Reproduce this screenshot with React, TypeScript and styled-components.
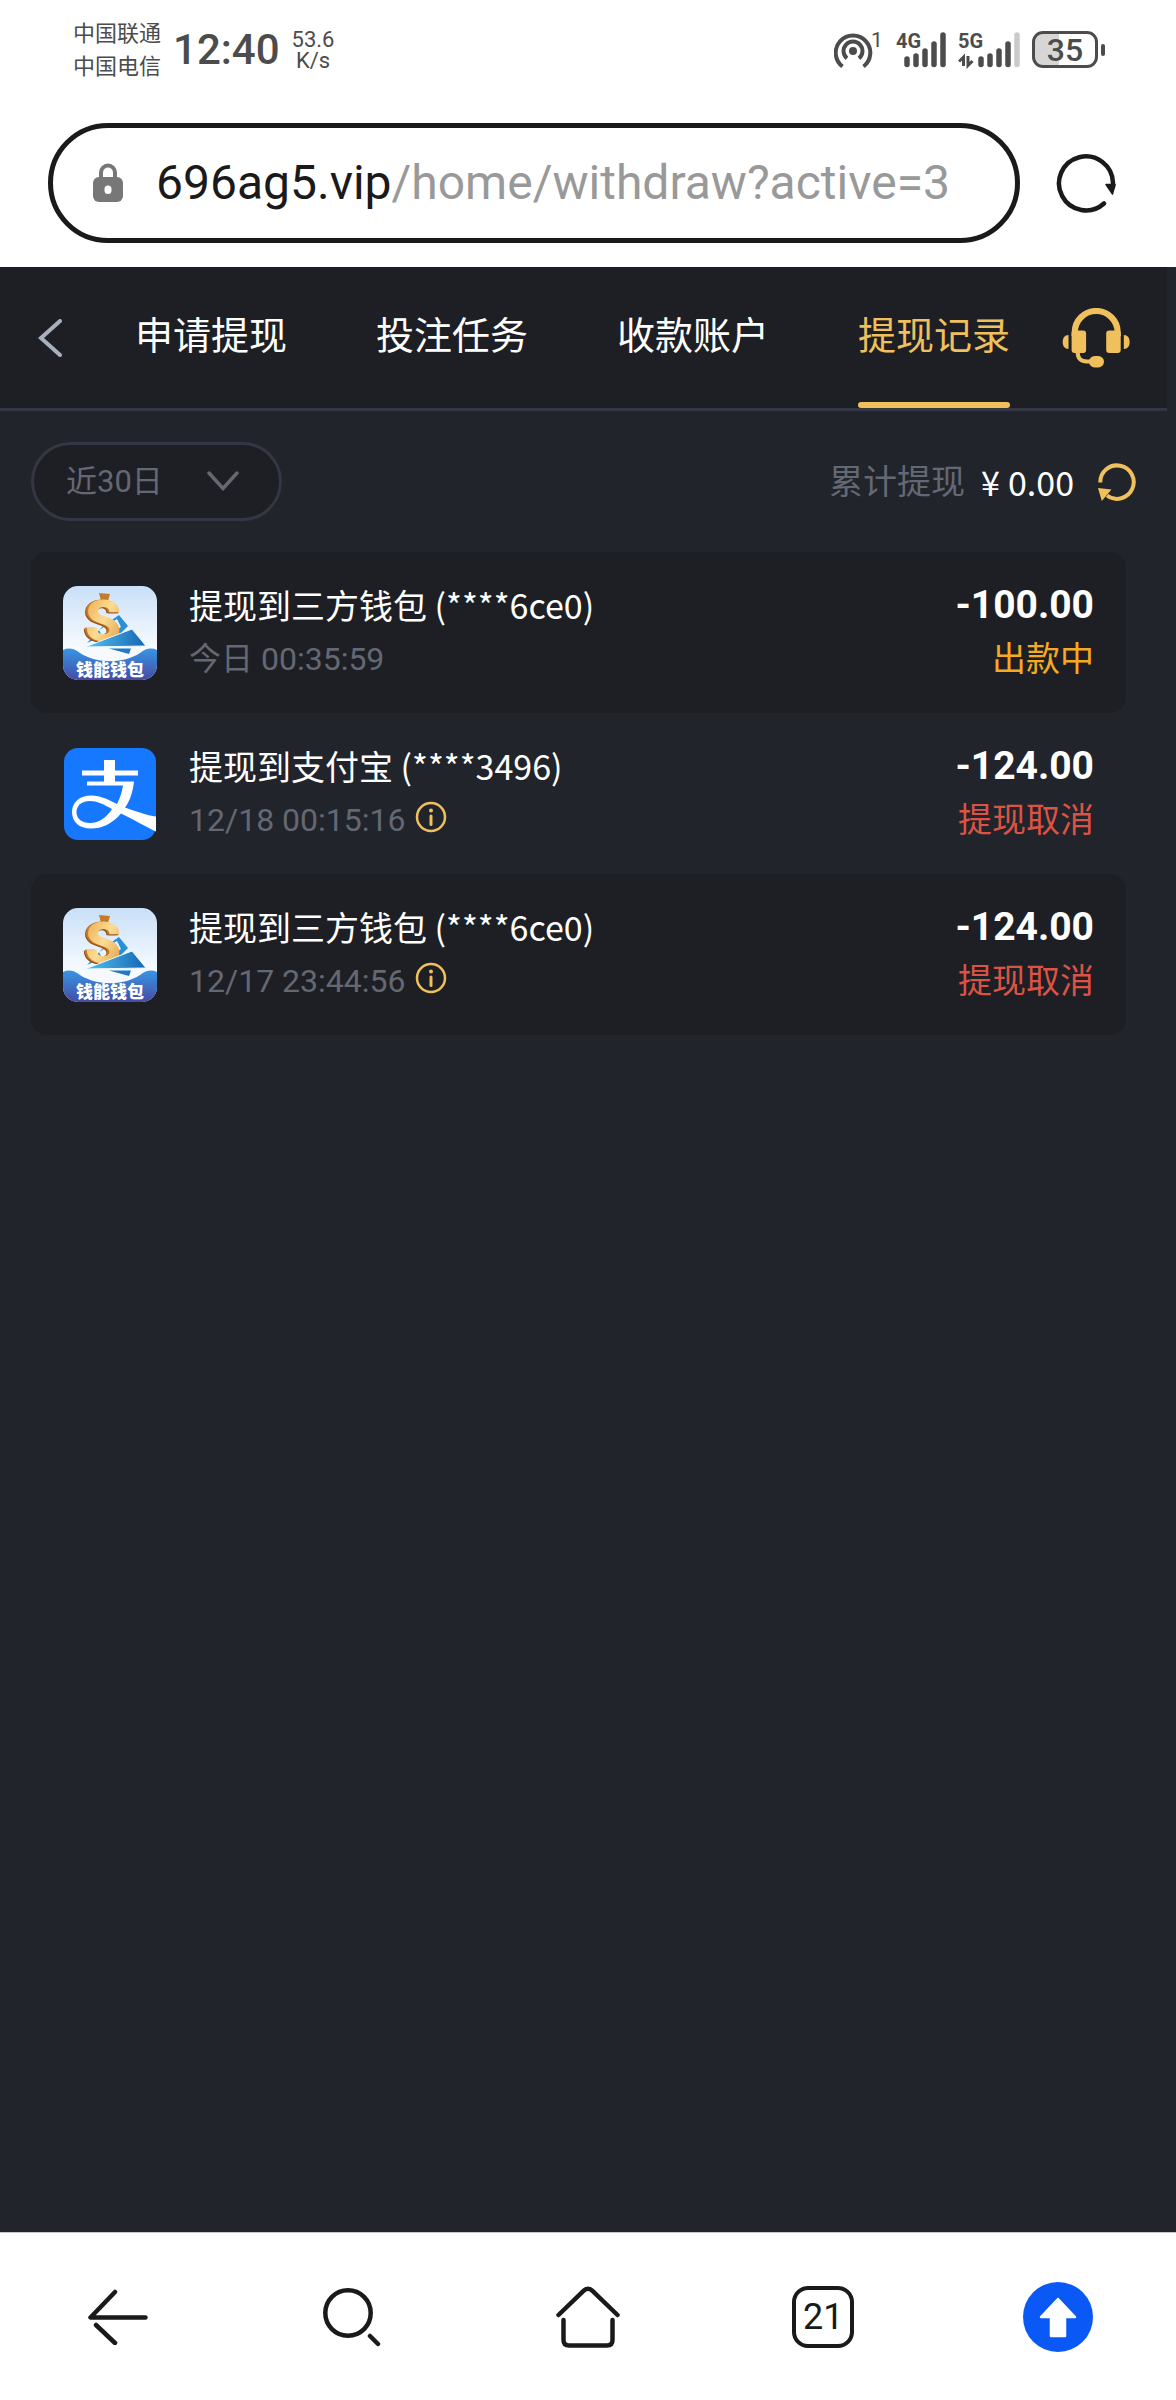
import React from "react";
import styled, { createGlobalStyle, css } from "styled-components";

const color = {
  ink: "#1a1a1a",
  status: "#4c4c4c",
  header: "#1e1f24",
  page: "#21242b",
  line: "#343743",
  muted: "#646873",
  gold: "#efc05c",
  orange: "#f5aa21",
  red: "#dc5345",
};

const GlobalStyle = createGlobalStyle`
  *, *::before, *::after { box-sizing: border-box; }
  body {
    margin: 0;
    background: #fff;
    font-family: Roboto, "Noto Sans CJK SC", sans-serif;
  }
  h2, p, ul { margin: 0; padding: 0; }
`;

const Screen = styled.div`
  display: flex;
  flex-direction: column;
  min-height: 100vh;
`;

const bareButton = css`
  display: flex;
  align-items: center;
  justify-content: center;
  padding: 0;
  border: 0;
  background: none;
  color: inherit;
  font: inherit;
  cursor: pointer;
`;

/* Phone status bar */

const StatusBar = styled.div`
  display: flex;
  align-items: center;
  justify-content: space-between;
  height: 99px;
  padding: 0 71px 0 73px;
  color: ${color.status};
`;

const StatusSide = styled.div`
  display: flex;
  align-items: center;
  gap: 12px;
`;

const Carriers = styled.div`
  font-size: 22px;
  line-height: 33px;
`;

const Clock = styled.time`
  font-size: 42px;
  font-weight: 500;
  line-height: 50px;
`;

const NetSpeed = styled.div`
  font-size: 22px;
  line-height: 21px;
  text-align: center;
`;

const BatteryWrap = styled.div`
  display: flex;
  align-items: center;
  gap: 3px;
`;

const BatteryBody = styled.div`
  display: flex;
  align-items: center;
  justify-content: center;
  width: 66px;
  height: 37px;
  border: 3px solid ${color.status};
  border-radius: 11px;
  background: linear-gradient(90deg, #d6d6d6 40%, #fff 40%);
  font-size: 32px;
  font-weight: 500;
  line-height: 32px;
`;

const BatteryNub = styled.span`
  width: 4px;
  height: 12px;
  border-radius: 2px;
  background: ${color.status};
`;

/* Browser address bar */

const AddressRow = styled.div`
  display: flex;
  align-items: center;
  gap: 36px;
  padding: 24px 60px 24px 48px;
`;

const AddressBox = styled.button`
  ${bareButton}
  flex: 1;
  min-width: 0;
  justify-content: flex-start;
  gap: 33px;
  height: 120px;
  padding: 0 40px;
  border: 5px solid ${color.ink};
  border-radius: 60px;
  color: ${color.ink};
  font-size: 48px;
  line-height: 60px;
  white-space: nowrap;
`;

const UrlPath = styled.span`
  color: #999;
`;

const ReloadButton = styled.button`
  ${bareButton}
  color: ${color.ink};
`;

/* Web page */

const Page = styled.main`
  flex: 1;
  padding-right: 9px;
  background: ${color.page};
  color: #fff;
`;

const Header = styled.header`
  display: flex;
  align-items: center;
  height: 144px;
  padding: 0 37px 0 38px;
  border-bottom: 3px solid ${color.line};
  background: ${color.header};
`;

const BackButton = styled.button`
  ${bareButton}
  color: #a9b0bd;
`;

const Tabs = styled.nav`
  display: flex;
  flex: 1;
  justify-content: space-between;
  align-self: stretch;
  margin: 0 52px 0 73px;
`;

const Tab = styled.a<{ $active?: boolean }>`
  display: flex;
  flex-direction: column;
  color: ${(p) => (p.$active ? color.gold : "#fff")};
  font-size: 38px;
  text-decoration: none;
  white-space: nowrap;

  &::after {
    content: "";
    height: 6px;
    border-radius: 3px;
    background: ${(p) => (p.$active ? color.gold : "transparent")};
  }
`;

const TabLabel = styled.span`
  display: flex;
  flex: 1;
  align-items: center;
  padding-bottom: 4px;
`;

const ServiceButton = styled.button`
  ${bareButton}
  color: ${color.gold};
`;

const FilterRow = styled.section`
  display: flex;
  align-items: center;
  justify-content: space-between;
  padding: 31px;
`;

const RangePicker = styled.label`
  position: relative;
  display: flex;
  color: ${color.muted};
`;

const RangeSelect = styled.select`
  appearance: none;
  width: 251px;
  height: 79px;
  padding: 0 32px;
  border: 3px solid ${color.line};
  border-radius: 40px;
  background: ${color.header};
  color: inherit;
  font: inherit;
  font-size: 31px;
`;

const RangeArrow = styled.svg`
  position: absolute;
  top: 29px;
  right: 43px;
  pointer-events: none;
`;

const Summary = styled.div`
  display: flex;
  align-items: center;
  font-size: 34px;
  line-height: 54px;
`;

const SummaryLabel = styled.span`
  margin-right: 16px;
  color: ${color.muted};
`;

const SummaryAmount = styled.span`
  display: flex;
  gap: 8px;
  margin-right: 24px;
  font-family: "Noto Sans CJK SC", sans-serif;
`;

const RefreshButton = styled.button`
  ${bareButton}
  color: ${color.gold};
`;

const Records = styled.ul`
  margin: 0 41px 0 31px;
  list-style: none;
`;

const Record = styled.li`
  display: flex;
  align-items: center;
  gap: 32px;
  height: 161px;
  padding: 0 32px;
  border-radius: 16px;

  &:nth-child(odd) {
    background: ${color.header};
  }
`;

const RecordBody = styled.div`
  flex: 1;
  min-width: 0;
`;

const RecordTitle = styled.h2`
  font-family: "Noto Sans CJK SC", sans-serif;
  font-size: 34px;
  font-weight: 400;
  line-height: 52px;
`;

const RecordTime = styled.p`
  display: flex;
  align-items: center;
  gap: 10px;
  color: ${color.muted};
  font-size: 32px;
  line-height: 56px;
`;

const InfoButton = styled.button`
  ${bareButton}
  padding-bottom: 6px;
  color: ${color.gold};
`;

const RecordResult = styled.div`
  text-align: right;
`;

const Amount = styled.p`
  font-size: 39px;
  font-weight: 700;
  line-height: 52px;
`;

const State = styled.p<{ $tone: string }>`
  color: ${(p) => p.$tone};
  font-size: 34px;
  line-height: 56px;
`;

/* Browser toolbar */

const Toolbar = styled.nav`
  display: grid;
  grid-template-columns: repeat(5, 1fr);
  align-items: center;
  height: 168px;
  border-top: 1px solid #c6c9cb;
  background: #fff;
  color: ${color.ink};
`;

const ToolButton = styled.button`
  ${bareButton}
  height: 100%;
`;

const TabCount = styled.span`
  display: flex;
  align-items: center;
  justify-content: center;
  width: 62px;
  height: 62px;
  border: 4px solid ${color.ink};
  border-radius: 16px;
  font-size: 36px;
  line-height: 36px;
`;

const HotspotIcon = () => (
  <svg width="50" height="48" viewBox="0 -6 50 48" fill="none" stroke="currentColor" strokeWidth="4" aria-hidden>
    <circle cx="19" cy="19" r="4" fill="currentColor" stroke="none" />
    <path d="M13 26.4A9.5 9.5 0 1 1 25 26.4" />
    <path d="M8.5 34.5A17.3 17.3 0 1 1 29.5 34.5" />
    <text x="37" y="15" fontSize="21" fill="currentColor" stroke="none">1</text>
  </svg>
);

const barTops = [27, 24, 19, 12, 3];

interface SignalProps {
  label: string;
  start: number;
  lit: number;
  transfer?: boolean;
}

const Signal = ({ label, start, lit, transfer }: SignalProps) => {
  const width = start + 39;
  return (
    <svg width={width} height="48" viewBox={`0 -6 ${width} 48`} aria-hidden>
      <text x="0" y="16" fontSize="20" fontWeight="700" fill="currentColor">{label}</text>
      {barTops.map((top, i) => (
        <path
          key={top}
          d={`M${start + 9 * i} ${top}V32.5`}
          stroke={i < lit ? "currentColor" : "#cacaca"}
          strokeWidth="5.5"
          strokeLinecap="round"
        />
      ))}
      {transfer && <path d="M5.5 34V25L1 29.5M10 24V33.5L14.5 29" fill="none" stroke="currentColor" strokeWidth="3" />}
    </svg>
  );
};

const LockIcon = () => (
  <svg width="30" height="40" viewBox="0 0 30 40" aria-hidden>
    <path d="M8 18V9.5a7 7 0 0 1 14 0V18" fill="none" stroke="#777" strokeWidth="4" />
    <rect y="14" width="30" height="25" rx="6" fill="#777" />
    <rect x="11.5" y="22.5" width="7" height="8.5" rx="3.5" fill="#fff" />
  </svg>
);

const ReloadIcon = () => (
  <svg width="60" height="60" viewBox="0 0 60 60" aria-hidden>
    <path d="M57 34V30A27 27 0 1 0 48 50.5" fill="none" stroke="currentColor" strokeWidth="4.5" strokeLinecap="round" />
    <path d="M50 31.5H59L56.5 41Z" fill="currentColor" stroke="currentColor" strokeWidth="1.5" strokeLinejoin="round" />
  </svg>
);

const ChevronLeft = () => (
  <svg width="24" height="38" viewBox="0 0 24 38" fill="none" stroke="currentColor" strokeWidth="4" strokeLinecap="round" aria-hidden>
    <path d="M22 2L3 19L22 36" />
  </svg>
);

const HeadsetIcon = () => (
  <svg width="68" height="60" viewBox="0 0 68 60" fill="currentColor" aria-hidden>
    <path d="M12.7 28V24.5a21.5 21.5 0 0 1 43 0V28" fill="none" stroke="currentColor" strokeWidth="6.2" />
    <rect x="9.6" y="22.5" width="14.5" height="22.5" rx="3" />
    <rect x="44.2" y="22.5" width="14.5" height="22.5" rx="3" />
    <path d="M6.5 27V41C2.500 41 .7 38 .7 34S2.500 27 6.5 27Z" />
    <path d="M61.8 27V41C65.800 41 67.600 38 67.600 34S65.800 27 61.800 27Z" />
    <path d="M15.7 44Q15.500 53.500 25 53.500H31" fill="none" stroke="currentColor" strokeWidth="4" />
    <rect x="27" y="48" width="15" height="11.5" rx="5.7" />
  </svg>
);

const RefreshIcon = () => (
  <svg width="38" height="38" viewBox="0 0 38 38" aria-hidden>
    <path d="M2.3 19.5A16.7 16.7 0 1 1 9 32.5" fill="none" stroke="currentColor" strokeWidth="4" />
    <path d="M0 25L13.5 26.5L3.8 38Z" fill="currentColor" />
  </svg>
);

const InfoIcon = () => (
  <svg width="32" height="32" viewBox="0 0 32 32" aria-hidden>
    <circle cx="16" cy="16" r="14" fill="none" stroke="currentColor" strokeWidth="2.5" />
    <circle cx="16" cy="9.5" r="2" fill="currentColor" />
    <path d="M16 15V23.5" stroke="currentColor" strokeWidth="3" strokeLinecap="round" />
  </svg>
);

const CoinSign = styled.text`
  font-size: 58px;
  font-weight: 900;
  filter: drop-shadow(-2px 0 0 #c67b2b) drop-shadow(-1px 1px 0 #96511c);
`;

const WalletLogo = () => {
  const id = React.useId();
  return (
    <svg width="94" height="94" viewBox="0 0 94 94" aria-hidden>
      <defs>
        <clipPath id={`${id}c`}><rect width="94" height="94" rx="15" /></clipPath>
        <linearGradient id={`${id}s`} x1="0" y1="0" x2="0" y2="1">
          <stop offset="0" stopColor="#c9e0f8" />
          <stop offset=".65" stopColor="#f6faff" />
        </linearGradient>
        <linearGradient id={`${id}w`} x1="0" y1="0" x2="0" y2="1">
          <stop offset="0" stopColor="#3796e4" />
          <stop offset="1" stopColor="#474aa4" />
        </linearGradient>
        <linearGradient id={`${id}g`} x1="0" y1="0" x2="1" y2="1">
          <stop offset="0" stopColor="#e9a13f" />
          <stop offset=".5" stopColor="#fbdc94" />
          <stop offset="1" stopColor="#dc8f30" />
        </linearGradient>
        <linearGradient id={`${id}b`} x1="0" y1="0" x2="1" y2="0">
          <stop offset="0" stopColor="#55c4f0" />
          <stop offset="1" stopColor="#1565b4" />
        </linearGradient>
      </defs>
      <g clipPath={`url(#${id}c)`}>
        <rect width="94" height="94" fill={`url(#${id}s)`} />
        <path d="M56 29L65 40L58 47L33 53L24 57L40 40Z" fill="#2b8fd3" />
        <path d="M54 33L58 41L40 52L36 44Z" fill="#e6f4ff" />
        <path d="M36 7L47 8L45 15H38Z" fill="#c67b2b" />
        <CoinSign x="22" y="55" fill={`url(#${id}g)`}>S</CoinSign>
        <path d="M22 61L69 43L83 60Z" fill={`url(#${id}b)`} stroke="#eef7ff" strokeWidth="1" />
        <path d="M46 62.5H68L66 68Z" fill="#2279c6" />
        <path d="M0 64Q8 60 17 67C34 78 60 78 77 67Q86 60 94 64V94H0Z" fill={`url(#${id}w)`} />
        <text x="47" y="90" fontSize="17" fontWeight="900" textAnchor="middle" fill="#fff">钱能钱包</text>
      </g>
    </svg>
  );
};

const AlipayLogo = () => (
  <svg width="94" height="94" viewBox="-1 -1 94 94" aria-hidden>
    <rect width="92" height="92" rx="14" fill="#1677ff" />
    <g fill="#fff">
      <rect x="40" y="12" width="11" height="24" />
      <rect x="18" y="22.5" width="56" height="5" />
      <path d="M23 33.5H70C69 43 66 53 61 59.5C79 66 87 68 92 68.5V83.5C84 80 67 70 57 65.5C48 76 38 80.5 27 80.5C15 80.5 8 74 8 64C8 54 16 47.5 27 47.5C37 47.5 45 52 53 56C56 50 58 44 59 37.5H23Z" />
    </g>
    <path d="M48 61C39 56 33 53 26 53C17 53 12.5 58 12.5 64C12.5 71 18 75 26 75C35 75 43 69 48 61Z" fill="#1677ff" />
  </svg>
);

const records = [
  { logo: "wallet", title: "提现到三方钱包 (****6ce0)", time: "今日 00:35:59", amount: "-100.00", state: "出款中", tone: color.orange, info: false },
  { logo: "alipay", title: "提现到支付宝 (****3496)", time: "12/18 00:15:16", amount: "-124.00", state: "提现取消", tone: color.red, info: true },
  { logo: "wallet", title: "提现到三方钱包 (****6ce0)", time: "12/17 23:44:56", amount: "-124.00", state: "提现取消", tone: color.red, info: true },
];

const tabs = ["申请提现", "投注任务", "收款账户", "提现记录"];

export default function App() {
  return (
    <Screen>
      <GlobalStyle />
      <StatusBar>
        <StatusSide>
          <Carriers>
            <div>中国联通</div>
            <div>中国电信</div>
          </Carriers>
          <Clock>12:40</Clock>
          <NetSpeed>
            <div>53.6</div>
            <div>K/s</div>
          </NetSpeed>
        </StatusSide>
        <StatusSide>
          <HotspotIcon />
          <Signal label="4G" start={11} lit={5} />
          <Signal label="5G" start={23} lit={4} transfer />
          <BatteryWrap>
            <BatteryBody>35</BatteryBody>
            <BatteryNub />
          </BatteryWrap>
        </StatusSide>
      </StatusBar>

      <AddressRow>
        <AddressBox type="button">
          <LockIcon />
          <span>
            696ag5.vip<UrlPath>/home/withdraw?active=3</UrlPath>
          </span>
        </AddressBox>
        <ReloadButton type="button" aria-label="刷新">
          <ReloadIcon />
        </ReloadButton>
      </AddressRow>

      <Page>
        <Header>
          <BackButton type="button" aria-label="返回">
            <ChevronLeft />
          </BackButton>
          <Tabs>
            {tabs.map((name, i) => (
              <Tab key={name} href={`#${i}`} $active={i === 3} aria-current={i === 3 ? "page" : undefined}>
                <TabLabel>{name}</TabLabel>
              </Tab>
            ))}
          </Tabs>
          <ServiceButton type="button" aria-label="客服">
            <HeadsetIcon />
          </ServiceButton>
        </Header>

        <FilterRow>
          <RangePicker>
            <RangeSelect aria-label="时间范围" defaultValue="30">
              <option value="30">近30日</option>
            </RangeSelect>
            <RangeArrow width="32" height="20" viewBox="0 0 32 20" fill="none" stroke="currentColor" strokeWidth="3.5" strokeLinecap="round" aria-hidden>
              <path d="M2 2L16 17.5L30 2" />
            </RangeArrow>
          </RangePicker>
          <Summary>
            <SummaryLabel>累计提现</SummaryLabel>
            <SummaryAmount>
              <span>¥</span>
              <span>0.00</span>
            </SummaryAmount>
            <RefreshButton type="button" aria-label="刷新金额">
              <RefreshIcon />
            </RefreshButton>
          </Summary>
        </FilterRow>

        <Records>
          {records.map((r) => (
            <Record key={r.time}>
              {r.logo === "wallet" ? <WalletLogo /> : <AlipayLogo />}
              <RecordBody>
                <RecordTitle>{r.title}</RecordTitle>
                <RecordTime>
                  <time>{r.time}</time>
                  {r.info && (
                    <InfoButton type="button" aria-label="详情">
                      <InfoIcon />
                    </InfoButton>
                  )}
                </RecordTime>
              </RecordBody>
              <RecordResult>
                <Amount>{r.amount}</Amount>
                <State $tone={r.tone}>{r.state}</State>
              </RecordResult>
            </Record>
          ))}
        </Records>
      </Page>

      <Toolbar>
        <ToolButton type="button" aria-label="后退">
          <svg width="60" height="56" viewBox="0 0 60 56" fill="none" stroke="currentColor" strokeWidth="4.5" strokeLinecap="round" strokeLinejoin="round" aria-hidden>
            <path d="M27 3L2.5 28.5H57.5" />
            <path d="M8 36L27 54" />
          </svg>
        </ToolButton>
        <ToolButton type="button" aria-label="搜索">
          <svg width="60" height="60" viewBox="0 0 60 60" fill="none" stroke="currentColor" strokeWidth="4.5" strokeLinecap="round" aria-hidden>
            <circle cx="25" cy="26" r="22.7" />
            <path d="M47 49L55 57" />
          </svg>
        </ToolButton>
        <ToolButton type="button" aria-label="主页">
          <svg width="64" height="64" viewBox="0 0 64 64" fill="none" stroke="currentColor" strokeWidth="4.5" strokeLinecap="round" aria-hidden>
            <path d="M2.5 30L28 5.5Q32 2 36 5.5L61.5 30" />
            <path d="M7.5 35V55Q7.5 60.5 13 60.5H51Q56.5 60.5 56.5 55V35" />
          </svg>
        </ToolButton>
        <ToolButton type="button" aria-label="标签页">
          <TabCount>21</TabCount>
        </ToolButton>
        <ToolButton type="button" aria-label="回到顶部">
          <svg width="70" height="70" viewBox="0 0 70 70" aria-hidden>
            <circle cx="35" cy="35" r="35" fill="#0a59f7" />
            <path d="M35 17L52 35H42V54H28V35H18Z" fill="#fff" stroke="#fff" strokeWidth="2.5" strokeLinejoin="round" />
          </svg>
        </ToolButton>
      </Toolbar>
    </Screen>
  );
}
